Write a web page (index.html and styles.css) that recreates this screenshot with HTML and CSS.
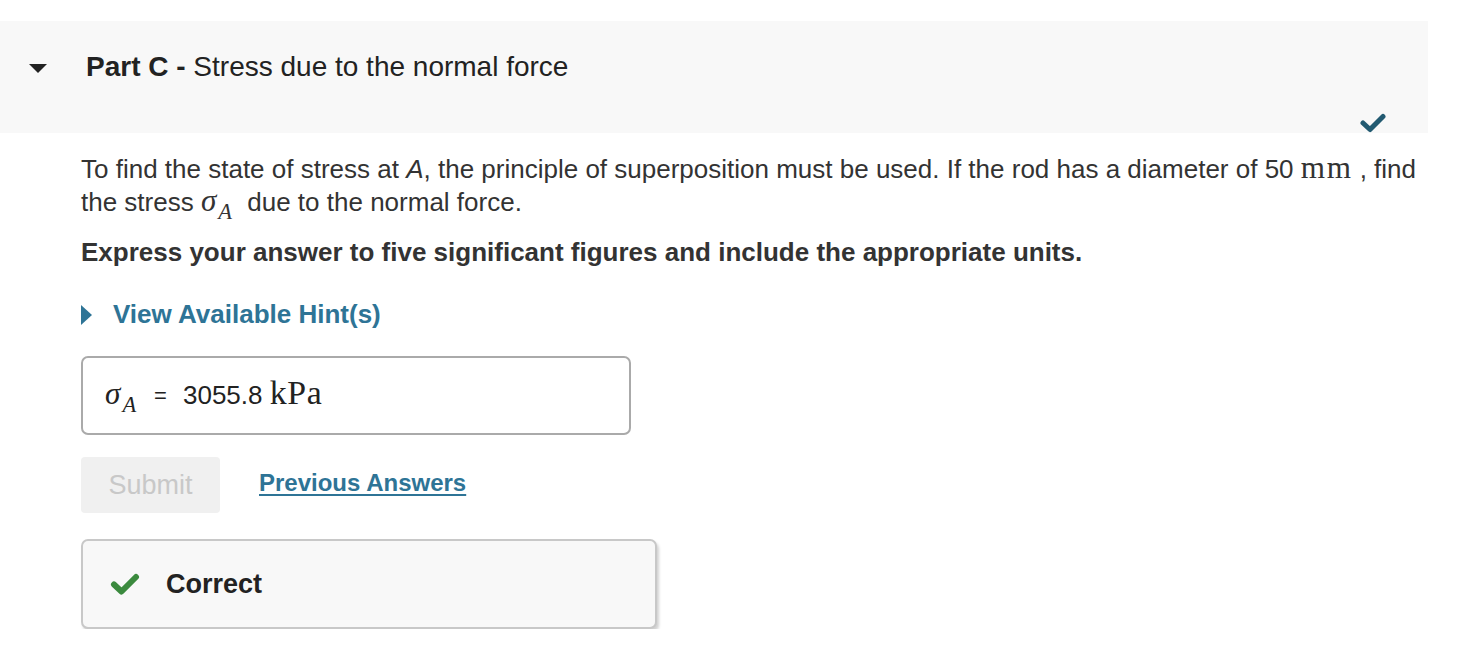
FILE: index.html
```html
<!DOCTYPE html>
<html lang="en">

<head>
    <meta charset="UTF-8">
    <title>Part C - Stress due to the normal force</title>
    <link rel="stylesheet" href="styles.css">
</head>

<body>
    <div class="part">
        <div class="part-header">
            <span class="caret-down"></span>
            <h2 class="part-title"><b>Part C -</b> Stress due to the normal force</h2>
            <svg class="part-done" width="26" height="20" viewBox="0 0 26 20">
                <path d="M3 10 L10 16.5 L23 3.5" fill="none" stroke="#225a71" stroke-width="5"
                    stroke-linecap="round" stroke-linejoin="round" />
            </svg>
        </div>

        <div class="part-body">
            <p class="question">
                To find the state of stress at <i>A</i>, the principle of superposition must be used. If the rod has a
                diameter of 50 <span class="math unit">mm</span> , find the stress <span class="math symbol"><i>σ</i><sub>A</sub></span>
                due to the normal force.
            </p>
            <p class="instructions">Express your answer to five significant figures and include the appropriate units.</p>

            <div class="hint-toggle">
                <span class="caret-right"></span>
                <a href="#" class="hint-link">View Available Hint(s)</a>
            </div>

            <div class="answer-box">
                <span class="math"><i>σ</i><sub>A</sub></span>
                <span class="equals">=</span>
                <span class="answer-value">3055.8 <span class="math unit-large">kPa</span></span>
            </div>

            <div class="actions">
                <button class="submit-button" disabled>Submit</button>
                <a href="#" class="prev-answers">Previous Answers</a>
            </div>

            <div class="feedback">
                <svg width="30" height="24" viewBox="0 0 30 24">
                    <path d="M4 12.5 L11.5 19.5 L26 5" fill="none" stroke="#3b8a3e" stroke-width="6"
                        stroke-linecap="round" stroke-linejoin="round" />
                </svg>
                <span class="feedback-text">Correct</span>
            </div>
        </div>
    </div>
</body>

</html>
```

FILE: styles.css
```css
body {
    margin: 0;
    padding: 0;
    font-family: "Liberation Sans", Arial, sans-serif;
    color: #333333;
    background-color: #ffffff;
}

.part {
    width: 1428px;
    padding-top: 21px;
}

/* Grey band with the part name */
.part-header {
    position: relative;
    display: flex;
    align-items: flex-start;
    height: 112px;
    background-color: #f8f8f8;
}

.caret-down {
    width: 0;
    height: 0;
    margin: 43px 0 0 29px;
    border-left: 9px solid transparent;
    border-right: 9px solid transparent;
    border-top: 9px solid #222222;
}

.part-title {
    margin: 30px 0 0 39px;
    font-size: 28px;
    font-weight: normal;
    color: #222222;
}

.part-done {
    position: absolute;
    right: 42px;
    bottom: 0;
}

.part-body {
    width: 1360px;
    padding: 20px 0 0 81px;
}

.question {
    margin: 0;
    font-size: 26px;
    line-height: 33px;
    color: #333333;
}

/* Inline formulas */
.math {
    font-family: "Liberation Serif", "DejaVu Serif", serif;
    font-size: 1.2em;
    line-height: 0;
}

.math.unit {
    letter-spacing: 0.05em;
}

.math.unit-large {
    font-size: 1.3em;
    letter-spacing: 0.02em;
}

.math.symbol {
    margin-right: 8px;
}

.math sub {
    position: relative;
    top: 0.35em;
    font-size: 0.72em;
    font-style: italic;
    vertical-align: baseline;
    margin-left: 2px;
}

.instructions {
    margin: 17px 0 0 0;
    font-size: 26px;
    font-weight: bold;
    line-height: 33px;
}

.hint-toggle {
    display: flex;
    align-items: center;
    margin-top: 30px;
}

.caret-right {
    width: 0;
    height: 0;
    border-top: 10px solid transparent;
    border-bottom: 10px solid transparent;
    border-left: 11px solid #2e7496;
}

.hint-link {
    margin-left: 21px;
    font-size: 26px;
    font-weight: bold;
    color: #2e7496;
    text-decoration: none;
}

/* Submitted answer */
.answer-box {
    display: flex;
    align-items: center;
    box-sizing: border-box;
    width: 550px;
    height: 79px;
    margin-top: 26px;
    padding-left: 22px;
    border: 2px solid #aaaaaa;
    border-radius: 7px;
    font-size: 26px;
    color: #222222;
}

.equals {
    margin: 0 16px 0 18px;
    font-size: 22px;
}

.actions {
    display: flex;
    align-items: center;
    margin-top: 22px;
}

.submit-button {
    width: 139px;
    height: 56px;
    border: none;
    border-radius: 4px;
    background-color: #f0f0f0;
    color: #c8c8c8;
    font-family: "Liberation Sans", Arial, sans-serif;
    font-size: 27px;
}

.prev-answers {
    margin-left: 39px;
    padding-bottom: 5px;
    font-size: 24px;
    font-weight: bold;
    color: #2e7496;
    text-decoration: underline;
    text-underline-offset: 3px;
}

.feedback {
    display: flex;
    align-items: center;
    box-sizing: border-box;
    width: 576px;
    height: 90px;
    margin-top: 26px;
    padding-left: 27px;
    background-color: #f8f8f8;
    border: 2px solid #c8c8c8;
    border-radius: 7px;
    box-shadow: 2px 3px 3px rgba(0, 0, 0, 0.18);
}

.feedback-text {
    margin-left: 26px;
    font-size: 27px;
    font-weight: bold;
    color: #222222;
}
```
